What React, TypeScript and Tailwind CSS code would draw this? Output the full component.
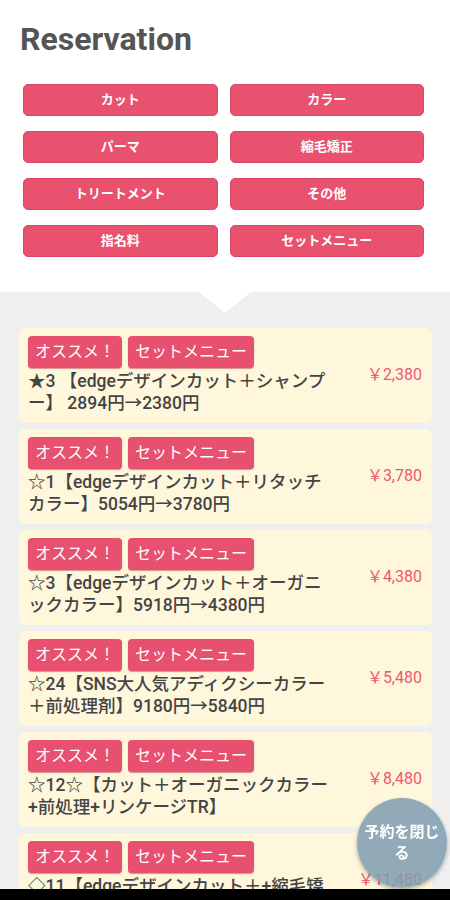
import React from "react";

const categories = [
  "カット",
  "カラー",
  "パーマ",
  "縮毛矯正",
  "トリートメント",
  "その他",
  "指名料",
  "セットメニュー",
];

const menus = [
  { title: "★3 【edgeデザインカット＋シャンプー】 2894円→2380円", price: "￥2,380" },
  { title: "☆1【edgeデザインカット＋リタッチカラー】5054円→3780円", price: "￥3,780" },
  { title: "☆3【edgeデザインカット＋オーガニックカラー】5918円→4380円", price: "￥4,380" },
  { title: "☆24【SNS大人気アディクシーカラー＋前処理剤】9180円→5840円", price: "￥5,480" },
  { title: "☆12☆【カット＋オーガニックカラー+前処理+リンケージTR】", price: "￥8,480" },
  { title: "◇11【edgeデザインカット＋+縮毛矯正】15280円→11480円", price: "￥11,480" },
];

const font = { fontFamily: 'Roboto, "Noto Sans CJK JP", sans-serif' };

function MenuCard({ title, price }: { title: string; price: string }) {
  return (
    <div className="flex rounded-[6px] bg-[#fff7dc] pt-[8px] pb-[9px] pl-[9px] pr-[10px]">
      <div className="w-[305px] shrink-0">
        <div className="flex gap-[6px]">
          <span className="flex h-[32px] items-center rounded-[4px] bg-[#e8506f] px-[7px] text-[16px] text-white shadow-[0_1px_1px_rgba(180,40,70,0.5)]">
            オススメ！
          </span>
          <span className="flex h-[32px] items-center rounded-[4px] bg-[#e8506f] px-[7px] text-[16px] text-white shadow-[0_1px_1px_rgba(180,40,70,0.5)]">
            セットメニュー
          </span>
        </div>
        <p className="mt-[2px] text-[17.5px] leading-[22px] font-medium text-[#444]">
          {title}
        </p>
      </div>
      <div className="flex flex-1 items-center justify-end text-[16px] text-[#ec5876]">
        {price}
      </div>
    </div>
  );
}

export default function App() {
  return (
    <div className="min-h-screen w-[450px] bg-[#efefef]" style={font}>
      <div className="bg-white pt-[20px] pb-[35px]">
        <h1 className="pl-[20px] text-[32px] leading-[38px] font-bold text-[#555]">
          Reservation
        </h1>
        <div className="mt-[26px] grid grid-cols-2 gap-x-[12px] gap-y-[15px] pl-[23px] pr-[26px]">
          {categories.map((c) => (
            <button
              key={c}
              className="flex h-[32px] items-center justify-center rounded-[5px] border border-[#dc4565] bg-[#e9526f] text-[13px] font-bold text-white"
            >
              {c}
            </button>
          ))}
        </div>
      </div>

      <div className="relative pl-[19px] pr-[18px] pt-[36px] pb-[40px]">
        <div className="absolute left-[199px] top-0 h-0 w-0 border-x-[26px] border-t-[21px] border-x-transparent border-t-white" />
        <div className="flex flex-col gap-[6px]">
          {menus.map((m) => (
            <MenuCard key={m.price} title={m.title} price={m.price} />
          ))}
        </div>
      </div>

      <button className="fixed left-[357px] top-[798px] flex h-[90px] w-[90px] items-center justify-center rounded-full bg-[#7f9cb0]/85 px-[7px] text-center text-[15px] leading-[21px] font-bold text-white shadow-[0_2px_4px_rgba(0,0,0,0.3)]">
        予約を閉じる
      </button>

      <div className="fixed bottom-0 left-0 h-[11px] w-[450px] bg-black" />
    </div>
  );
}
